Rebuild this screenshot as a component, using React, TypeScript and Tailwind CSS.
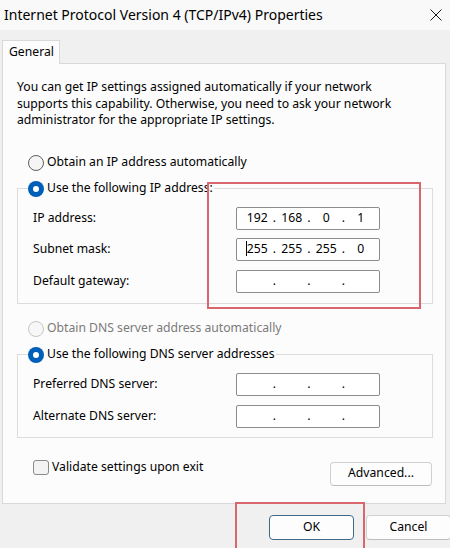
import React from 'react'

const FONT = "font-['Noto_Sans',sans-serif]"

function Radio({ checked, disabled, label }: { checked?: boolean; disabled?: boolean; label: string }) {
  return (
    <div className="flex items-center h-[20px] bg-[#fcfcfc]">
      {checked ? (
        <span className="w-[16px] h-[16px] rounded-full bg-[#005fb8] flex items-center justify-center">
          <span className="w-[6px] h-[6px] rounded-full bg-white" />
        </span>
      ) : (
        <span
          className={`w-[16px] h-[16px] rounded-full border ${
            disabled ? 'border-[#c5c5c5] bg-[#f7f7f7]' : 'border-[#5f5f5f] bg-[#f5f5f5]'
          }`}
        />
      )}
      <span className={`ml-[3px] pr-[1px] ${disabled ? 'text-[#7a7a7a]' : 'text-black'}`}>{label}</span>
    </div>
  )
}

function IpField({ parts, cursor }: { parts: string[]; cursor?: boolean }) {
  return (
    <div className="w-[144px] h-[23px] border border-[#8c8c8c] rounded-[2px] bg-white flex items-center pl-[6px]">
      {parts.map((p, i) => (
        <React.Fragment key={i}>
          <span className="w-[28.5px] text-center">
            {cursor && i === 0 ? (
              <span className="relative">
                <span className="absolute left-[-1px] top-[1px] bottom-[1px] w-px bg-black" />
                {p}
              </span>
            ) : (
              p
            )}
          </span>
          {i < 3 && <span className="w-[6px] text-center">.</span>}
        </React.Fragment>
      ))}
    </div>
  )
}

function Row({ label, children }: { label: string; children: React.ReactNode }) {
  return (
    <div className="flex items-center">
      <span className="w-[203px]">{label}</span>
      {children}
    </div>
  )
}

const EMPTY = ['', '', '', '']

export default function App() {
  return (
    <div className={`${FONT} relative w-[450px] h-[548px] overflow-hidden bg-[#f0f0f0] text-black text-[12.2px]`}>
      {/* Title bar */}
      <div className="h-[30px] bg-[#f9f9f9] flex items-center justify-between pl-[4px] pr-[8px]">
        <span className="text-[14px] leading-none">Internet Protocol Version 4 (TCP/IPv4) Properties</span>
        <svg width="12" height="12" viewBox="0 0 12 12">
          <path d="M0.5 0.5 L11.5 11.5 M11.5 0.5 L0.5 11.5" stroke="#1a1a1a" strokeWidth="1" fill="none" />
        </svg>
      </div>

      {/* Tab */}
      <div className="pt-[10px] pl-[2px]">
        <div className="relative z-10 -mb-px w-[58px] h-[24px] border border-b-0 border-[#d9d9d9] bg-[#fcfcfc] flex items-center pl-[6px]">
          General
        </div>

        {/* Panel */}
        <div className="w-[444px] h-[441px] border border-[#d9d9d9] bg-[#fcfcfc] pt-[15px]">
          <p className="pl-[14px] leading-[16.5px] whitespace-nowrap">
            You can get IP settings assigned automatically if your network
            <br />
            supports this capability. Otherwise, you need to ask your network
            <br />
            administrator for the appropriate IP settings.
          </p>

          <div className="pl-[25px] mt-[24px]">
            <Radio label="Obtain an IP address automatically" />
          </div>

          <fieldset className="ml-[14px] mr-[12px] mt-[6px] border border-[#dcdcdc] pl-[15px] pt-[8px] pb-[10px]">
            <legend className="ml-[-5px]">
              <Radio checked label="Use the following IP address:" />
            </legend>
            <div className="flex flex-col gap-[8.5px]">
              <Row label="IP address:">
                <IpField parts={['192', '168', '0', '1']} />
              </Row>
              <Row label="Subnet mask:">
                <IpField parts={['255', '255', '255', '0']} cursor />
              </Row>
              <Row label="Default gateway:">
                <IpField parts={EMPTY} />
              </Row>
            </div>
          </fieldset>

          <div className="pl-[25px] mt-[15px]">
            <Radio disabled label="Obtain DNS server address automatically" />
          </div>

          <fieldset className="ml-[14px] mr-[12px] mt-[6px] border border-[#dcdcdc] pl-[15px] pt-[8px] pb-[9px]">
            <legend className="ml-[-5px]">
              <Radio checked label="Use the following DNS server addresses" />
            </legend>
            <div className="flex flex-col gap-[9px]">
              <Row label="Preferred DNS server:">
                <IpField parts={EMPTY} />
              </Row>
              <Row label="Alternate DNS server:">
                <IpField parts={EMPTY} />
              </Row>
            </div>
          </fieldset>

          <div className="mt-[22px] pl-[30px] pr-[13px] flex items-start justify-between">
            <div className="flex items-center h-[16px]">
              <span className="w-[16px] h-[15px] rounded-[3px] border border-[#8a8a8a] bg-[#f3f3f3]" />
              <span className="ml-[3px]">Validate settings upon exit</span>
            </div>
            <button className="mt-[2px] w-[102px] h-[24px] rounded-[4px] border border-[#d0d0d0] border-b-[#bdbdbd] bg-[#fdfdfd]">
              Advanced...
            </button>
          </div>
        </div>
      </div>

      {/* Dialog buttons */}
      <div className="mt-[11px] pl-[269px] flex gap-[12px]">
        <button className="shrink-0 w-[85px] h-[25px] rounded-[4px] border border-[#3f6a86] bg-[#fdfdfd]">OK</button>
        <button className="shrink-0 w-[85px] h-[25px] rounded-[4px] border border-[#d0d0d0] border-b-[#bdbdbd] bg-[#fdfdfd]">
          Cancel
        </button>
      </div>

      {/* Red highlight annotations */}
      <div className="absolute left-[207px] top-[182px] w-[214px] h-[127px] border-2 border-[#d9666f] pointer-events-none" />
      <div className="absolute left-[235px] top-[502px] w-[130px] h-[50px] border-2 border-[#d9666f] pointer-events-none" />
    </div>
  )
}
